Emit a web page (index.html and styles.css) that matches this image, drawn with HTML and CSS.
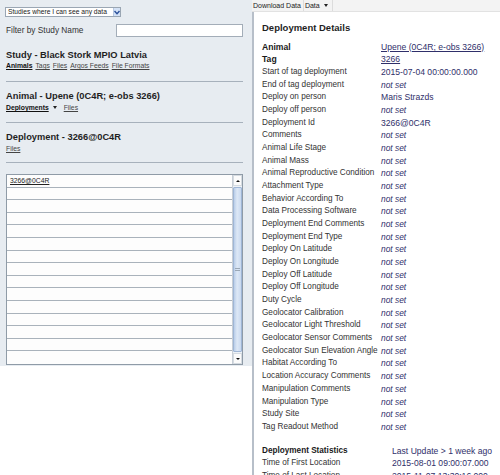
FILE: index.html
```html
<!DOCTYPE html>
<html lang="en">
<head>
<meta charset="utf-8">
<title>Deployment Details</title>
<link rel="stylesheet" href="styles.css">
</head>
<body>
<div class="page">
  <aside class="left">
    <div class="scope">
      <span class="scope-text">Studies where I can see any data</span>
      <span class="scope-btn"><svg width="6" height="5" viewBox="0 0 6 5"><path d="M0.5 1 L3 3.8 L5.5 1" fill="none" stroke="#2a4f9a" stroke-width="1.4"/></svg></span>
    </div>
    <div class="filter">
      <span class="filter-label">Filter by Study Name</span>
      <span class="filter-input"></span>
    </div>

    <h2 class="sec-title first">Study - Black Stork MPIO Latvia</h2>
    <nav class="links"><a class="on">Animals</a> <a>Tags</a> <a>Files</a> <a>Argos Feeds</a> <a>File Formats</a></nav>
    <div class="rule"></div>

    <h2 class="sec-title">Animal - Upene (0C4R; e-obs 3266)</h2>
    <nav class="links"><a class="on">Deployments</a><span class="caret"></span> <a>Files</a></nav>
    <div class="rule"></div>

    <h2 class="sec-title">Deployment - 3266@0C4R</h2>
    <nav class="links"><a>Files</a></nav>
    <div class="rule last"></div>

    <div class="list">
      <div class="rows">
        <div class="row"><a class="item">3266@0C4R</a></div>
        <div class="row"></div><div class="row"></div><div class="row"></div><div class="row"></div>
        <div class="row"></div><div class="row"></div><div class="row"></div><div class="row"></div>
        <div class="row"></div><div class="row"></div><div class="row"></div><div class="row"></div>
        <div class="row"></div><div class="row"></div>
      </div>
      <div class="vscroll">
        <span class="sbtn"><span class="tri up"></span></span>
        <span class="track"><span class="grip"></span></span>
        <span class="sbtn"><span class="tri down"></span></span>
      </div>
    </div>
  </aside>

  <main class="right">
    <div class="toolbar">
      <span class="tb-item">Download Data</span>
      <span class="tb-item">Data <span class="tb-caret"></span></span>
    </div>
    <div class="details">
      <h1 class="details-title">Deployment Details</h1>
      <dl class="grid">
        <dt class="strong">Animal</dt><dd><a>Upene (0C4R; e-obs 3266)</a></dd>
        <dt class="strong">Tag</dt><dd><a>3266</a></dd>
        <dt>Start of tag deployment</dt><dd>2015-07-04 00:00:00.000</dd>
        <dt>End of tag deployment</dt><dd class="ns">not set</dd>
        <dt>Deploy on person</dt><dd>Maris Strazds</dd>
        <dt>Deploy off person</dt><dd class="ns">not set</dd>
        <dt>Deployment Id</dt><dd>3266@0C4R</dd>
        <dt>Comments</dt><dd class="ns">not set</dd>
        <dt>Animal Life Stage</dt><dd class="ns">not set</dd>
        <dt>Animal Mass</dt><dd class="ns">not set</dd>
        <dt>Animal Reproductive Condition</dt><dd class="ns">not set</dd>
        <dt>Attachment Type</dt><dd class="ns">not set</dd>
        <dt>Behavior According To</dt><dd class="ns">not set</dd>
        <dt>Data Processing Software</dt><dd class="ns">not set</dd>
        <dt>Deployment End Comments</dt><dd class="ns">not set</dd>
        <dt>Deployment End Type</dt><dd class="ns">not set</dd>
        <dt>Deploy On Latitude</dt><dd class="ns">not set</dd>
        <dt>Deploy On Longitude</dt><dd class="ns">not set</dd>
        <dt>Deploy Off Latitude</dt><dd class="ns">not set</dd>
        <dt>Deploy Off Longitude</dt><dd class="ns">not set</dd>
        <dt>Duty Cycle</dt><dd class="ns">not set</dd>
        <dt>Geolocator Calibration</dt><dd class="ns">not set</dd>
        <dt>Geolocator Light Threshold</dt><dd class="ns">not set</dd>
        <dt>Geolocator Sensor Comments</dt><dd class="ns">not set</dd>
        <dt>Geolocator Sun Elevation Angle</dt><dd class="ns">not set</dd>
        <dt>Habitat According To</dt><dd class="ns">not set</dd>
        <dt>Location Accuracy Comments</dt><dd class="ns">not set</dd>
        <dt>Manipulation Comments</dt><dd class="ns">not set</dd>
        <dt>Manipulation Type</dt><dd class="ns">not set</dd>
        <dt>Study Site</dt><dd class="ns">not set</dd>
        <dt>Tag Readout Method</dt><dd class="ns">not set</dd>
      </dl>
      <dl class="stats">
        <dt class="strong stat-head">Deployment Statistics</dt><dd>Last Update &gt; 1 week ago</dd>
        <dt>Time of First Location</dt><dd>2015-08-01 09:00:07.000</dd>
        <dt>Time of Last Location</dt><dd>2015-11-07 13:30:16.000</dd>
      </dl>
    </div>
  </main>
</div>
</body>
</html>
```

FILE: styles.css
```css
* { box-sizing: border-box; }

html, body {
  margin: 0;
  padding: 0;
  background: #ffffff;
  height: 475px;
  overflow: hidden;
  font-family: "Liberation Sans", Arial, sans-serif;
  color: #333333;
}

.page {
  display: flex;
  align-items: flex-start;
  width: 500px;
  height: 475px;
}

/* ---------- left panel ---------- */
.left {
  width: 252px;
  flex: 0 0 252px;
  background: #e7ecf1;
  padding: 7px 0 1px 0;
  display: flex;
  flex-direction: column;
}

.scope {
  margin-left: 5px;
  width: 116px;
  height: 10px;
  background: #ffffff;
  border: 1px solid #9aa6b3;
  display: flex;
  align-items: center;
  justify-content: space-between;
}
.scope-text {
  font-size: 6.7px;
  line-height: 8px;
  padding-left: 2px;
  color: #222;
  white-space: nowrap;
}
.scope-btn {
  width: 7px;
  height: 8px;
  background: #d4e2f6;
  border-left: 1px solid #b7c8e2;
  display: flex;
  align-items: center;
  justify-content: center;
}

.filter {
  margin-top: 7px;
  height: 13px;
  display: flex;
  align-items: center;
  justify-content: space-between;
  padding: 0 9px 0 6px;
}
.filter-label {
  font-size: 8.3px;
  line-height: 13px;
  color: #333;
}
.filter-input {
  width: 127px;
  height: 13px;
  background: #ffffff;
  border: 1px solid #a3adb8;
}

.sec-title {
  margin: 9px 0 0 6px;
  font-size: 9.3px;
  line-height: 11px;
  font-weight: bold;
  color: #1f1f1f;
  white-space: nowrap;
}
.sec-title.first { margin-top: 13px; }

.links {
  margin-left: 6px;
  font-size: 6.8px;
  line-height: 11px;
  white-space: nowrap;
  color: #444;
  display: flex;
  align-items: center;
  gap: 3px;
}
.sec-title.first + .links { line-height: 10px; }
.links a {
  color: #444;
  text-decoration: underline;
}
.links a.on {
  color: #111;
  font-weight: bold;
}
.caret {
  width: 0;
  height: 0;
  border-left: 2.5px solid transparent;
  border-right: 2.5px solid transparent;
  border-top: 3px solid #222;
  margin: 0 4px 0 1px;
}

.rule {
  margin: 10px 9px 0 6px;
  height: 1px;
  background: #a7b1bc;
}
.links + .rule { margin-top: 9px; }
.sec-title.first + .links + .rule { margin-top: 10px; }
.rule.last { margin-top: 8px; }

.list {
  margin: 11px 9px 0 6px;
  height: 191px;
  border: 1px solid #8f9ba7;
  background: #ffffff;
  display: flex;
}
.rows {
  flex: 1;
  display: flex;
  flex-direction: column;
}
.row {
  height: 12.6px;
  border-bottom: 1px solid #a9b2bb;
  background: #fdfdfd;
  padding-left: 3px;
  font-size: 6.8px;
  line-height: 11.6px;
}
.row:last-child { border-bottom: none; }
.item {
  color: #222;
  text-decoration: underline;
}

.vscroll {
  width: 10px;
  flex: 0 0 10px;
  display: flex;
  flex-direction: column;
  border-left: 1px solid #c7ced6;
  background: #eef2f6;
}
.sbtn {
  height: 11px;
  background: #fbfbfb;
  border: 1px solid #d5dbe1;
  display: flex;
  align-items: center;
  justify-content: center;
}
.tri {
  width: 0;
  height: 0;
  border-left: 2px solid transparent;
  border-right: 2px solid transparent;
}
.tri.up { border-bottom: 2px solid #111; }
.tri.down { border-top: 2px solid #111; }
.track {
  flex: 1;
  margin: 1px 0;
  background: linear-gradient(to right, #b9cde8 0%, #dde8f6 45%, #c9d9ef 100%);
  border: 1px solid #9fb6d6;
  border-radius: 1px;
  display: flex;
  align-items: center;
  justify-content: center;
}
.grip {
  width: 5px;
  height: 4px;
  background: repeating-linear-gradient(to bottom, #9aa7b6 0 1px, transparent 1px 2px);
}

/* ---------- right panel ---------- */
.right {
  flex: 1;
  display: flex;
  flex-direction: column;
  height: 475px;
}
.toolbar {
  height: 12px;
  background: #f3f3f3;
  border-bottom: 1px solid #e2e2e2;
  display: flex;
  align-items: center;
  font-size: 7px;
  line-height: 11px;
  color: #222;
}
.tb-item {
  padding: 0 2px 0 1px;
  border-right: 1px solid #dcdcdc;
  display: flex;
  align-items: center;
  gap: 2px;
  white-space: nowrap;
}
.tb-item + .tb-item { border-right: 1px solid #dcdcdc; padding-right: 4px; }
.tb-caret {
  width: 0;
  height: 0;
  margin-left: 2px;
  border-left: 2.5px solid transparent;
  border-right: 2.5px solid transparent;
  border-top: 3px solid #222;
}

.details {
  flex: 1;
  border-left: 2px solid #b7bfc9;
  padding-left: 8px;
  overflow: hidden;
}
.details-title {
  margin: 10px 0 0 0;
  font-size: 9.5px;
  line-height: 12px;
  font-weight: bold;
  color: #1f1f1f;
}

.grid, .stats {
  margin: 0;
  display: grid;
  font-size: 8.2px;
  line-height: 12.67px;
}
.grid {
  margin-top: 6.7px;
  grid-template-columns: 119px auto;
}
.stats {
  margin-top: 11px;
  grid-template-columns: 130px auto;
}
dt {
  color: #333;
  white-space: nowrap;
}
dd {
  margin: 0;
  color: #2f2f6a;
  white-space: nowrap;
  font-size: 8.6px;
}
dd a {
  color: #2f2f6a;
  text-decoration: underline;
}
dd.ns { font-style: italic; font-size: 8.4px; }
dt.strong {
  font-weight: bold;
  color: #1a1a1a;
  font-size: 8.6px;
}
dt.stat-head { font-size: 8.2px; }
```
